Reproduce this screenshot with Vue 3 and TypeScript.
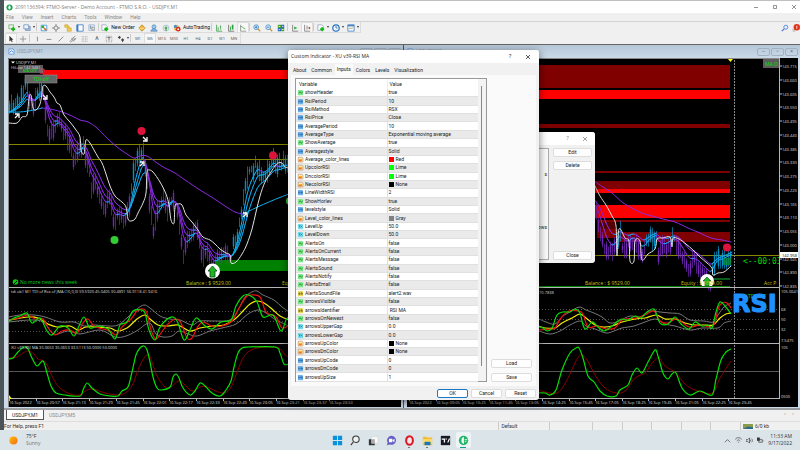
<script setup lang="ts">
type Pt = [number, number]
interface Bar { x: number; high: number; low: number; up: boolean }
interface Seg { d: string; up: boolean }

const menus = ['File', 'View', 'Insert', 'Charts', 'Tools', 'Window', 'Help']

const sheet = '<path d="M1 1h5l2 2v5H1z" fill="#f7f9fc" stroke="#8295ad" stroke-width=".8"/>'
const plus = '<path d="M6.500 4v5M4 6.500h5" stroke="#12b512" stroke-width="2.200"/>'
const icons: Record<string, string> = {
  newChart: '<path d="M1 1h6v5H1z" fill="#e2f1e0" stroke="#5d9b60" stroke-width=".8"/>' + plus,
  profiles: '<path d="M3 3h6v5H3z" fill="#a8c4e4" stroke="#7593ba"/><path d="M1 1h6v5H1z" fill="#eef5fc" stroke="#7593ba"/>',
  market: '<path d="M1.500 1.500h7v7h-7z" fill="#eef7ff" stroke="#3e9ad4"/><path d="M2 2h3v3H2z" fill="#29ad35"/><path d="M5 5l3 3" stroke="#e06c28" stroke-width="2"/>',
  target: '<circle cx="5" cy="5" r="2.500" fill="none" stroke="#777"/><path d="M5 0v3M5 7v3M0 5h3M7 5h3" stroke="#777"/>',
  navigator: '<path d="M1 1h4v3H1zM4 5h5v4H4z" fill="#f8cd55" stroke="#c7a12d" stroke-width=".8"/><circle cx="6" cy="4" r="1.400" fill="#e5bd29"/>',
  terminal: '<path d="M1 1h8v8H1z" fill="#fafdff" stroke="#3a78c4"/><path d="M1 1h2v8H1z" fill="#3a78c4"/>',
  tester: '<path d="M1 1h7v7H1z" fill="#e3edf7" stroke="#8aa5c4" stroke-width=".8"/><path d="M3 2v4M5 3v4" stroke="#6282aa"/><circle cx="6.500" cy="6" r="1.800" fill="#f8e9b4" stroke="#75869b" stroke-width=".8"/>',
  order: sheet + plus,
  editor: '<path d="M1 5l4-4 4 4-4 4z" fill="#f2b53a" stroke="#b37514" stroke-width=".8"/><path d="M2 5l3 1 3-1" stroke="#fff0ad" fill="none"/>',
  user: '<circle cx="5" cy="3.500" r="2.500" fill="#9ac8ef" stroke="#477fba" stroke-width=".8"/><path d="M1 9c1-4 7-4 8 0z" fill="#8ab3da" stroke="#477fba" stroke-width=".8"/>',
  signal: '<circle cx="5" cy="5" r="3.600" fill="none" stroke="#9cbcca"/><circle cx="5" cy="5" r="1.800" fill="#52ae65"/><path d="M5 5v4" stroke="#35a044"/>',
  auto: '<path d="M1 4l4-3 4 3-2 4H2z" fill="#e6b93d"/><circle cx="3" cy="3" r="2" fill="#4390ce"/><circle cx="6.500" cy="6.500" r="3" fill="#d83020"/><path d="M5.500 5.500h2v2h-2z" fill="#fff"/>',
  bars: '<path d="M2 1v8h7M4 4v4M7 2v5M6 3h1" stroke="#3b9a48" fill="none"/>',
  candles: '<path d="M2 1v8h7" stroke="#666" fill="none"/><path d="M4 3h1v5H4zM6 1h2v6H6z" fill="#28a13a"/>',
  line: '<path d="M2 1v8h7" stroke="#888" fill="none"/><path d="M2 3c3 0 3 3 6 3" stroke="#3dab50" fill="none"/>',
  zoomIn: '<circle cx="4" cy="4" r="3" fill="#d5eafa" stroke="#4689c4"/><path d="M4 2.500v3M2.500 4h3" stroke="#2a6eb5"/><path d="M6 6l3 3" stroke="#c59b35" stroke-width="1.600"/>',
  zoomOut: '<circle cx="4" cy="4" r="3" fill="#d5eafa" stroke="#4689c4"/><path d="M2.500 4h3" stroke="#2a6eb5"/><path d="M6 6l3 3" stroke="#c59b35" stroke-width="1.600"/>',
  tile: '<path d="M1 1h4v4H1zM5 5h4v4H5z" fill="#48a333"/><path d="M5 1h4v4H5zM1 5h4v4H1z" fill="#2767bf"/><path d="M2 3h2M6 3h2M2 7h2M6 7h2" stroke="#fff"/>',
  scroll: '<path d="M2 1v8h7" stroke="#777" fill="none"/><path d="M4 3l4 2-4 2z" fill="#31a843"/>',
  shift: '<path d="M2 1v8h7M5 2v5" stroke="#777" fill="none"/><path d="M9 3L6 5l3 2z" fill="#b6563b"/>',
  clock: '<circle cx="5" cy="5" r="4" fill="#eef7ff" stroke="#2873bd" stroke-width="1.500"/><path d="M5 2.500V5h2" stroke="#356792" fill="none"/>',
  template: '<path d="M1 1h8v8H1z" fill="#eef6ff" stroke="#4a86c0"/><path d="M1 2h8" stroke="#4a86c0" stroke-width="2"/><path d="M2 6l2-1 2 1 2-2" stroke="#c59d4e" fill="none"/>',
  cursor: '<path d="M3 1v7l2-1.500 1 2.500 1-.500-1-2.500h2z" fill="#333"/>',
  cross: '<path d="M5 1v8M1 5h8" stroke="#888"/>',
  vline: '<path d="M5.500 2v6" stroke="#777"/>',
  hline: '<path d="M2 5.500h6" stroke="#777"/>',
  trend: '<path d="M2 8l6-6" stroke="#777"/>',
  channel: '<path d="M1 8l7-7M2 9l7-5M3 4l4 4M5 3l3 3" stroke="#666" stroke-width=".8"/>',
  fibo: '<path d="M1 2h8M1 4h8M1 6h8M1 8h8" stroke="#999" stroke-dasharray="1 1"/>',
  label: '<path d="M1.500 1.500h7v7h-7z" fill="none" stroke="#888" stroke-dasharray="1 1"/><path d="M3 3h4M5 3v4" stroke="#555"/>',
  arrows: '<path d="M1 3l2-2 2 2-2 2zM5 6l2-2 2 2-2 3z" fill="#444"/>',
}

interface Tool { icon?: string; text?: string; name: string; drop?: boolean; on?: boolean; sep?: boolean }
const S: Tool = { name: '', sep: true }
const tools: Tool[] = [
  { icon: 'newChart', name: 'New chart', drop: true }, { icon: 'profiles', name: 'Profiles', drop: true }, S,
  { icon: 'market', name: 'Market watch' }, { icon: 'target', name: 'Data window' }, { icon: 'navigator', name: 'Navigator' },
  { icon: 'terminal', name: 'Terminal' }, { icon: 'tester', name: 'Strategy tester' }, S,
  { icon: 'order', name: 'New order', text: 'New Order' }, { icon: 'editor', name: 'Editor' }, { icon: 'user', name: 'Account' },
  { icon: 'signal', name: 'Signals' }, { icon: 'auto', name: 'AutoTrading', text: 'AutoTrading' }, S,
  { icon: 'bars', name: 'Bar chart' }, { icon: 'candles', name: 'Candlesticks' }, { icon: 'line', name: 'Line chart', on: true }, S,
  { icon: 'zoomIn', name: 'Zoom in' }, { icon: 'zoomOut', name: 'Zoom out' }, { icon: 'tile', name: 'Tile windows' }, S,
  { icon: 'scroll', name: 'Auto scroll' }, { icon: 'shift', name: 'Chart shift', on: true }, S,
  { icon: 'order', name: 'Indicators', drop: true }, { icon: 'clock', name: 'Periods', drop: true }, { icon: 'template', name: 'Templates', drop: true },
]
const drawTools: Tool[] = [
  { icon: 'cursor', name: 'Cursor', on: true }, { icon: 'cross', name: 'Crosshair' }, S,
  { icon: 'vline', name: 'Vertical line' }, { icon: 'hline', name: 'Horizontal line' }, { icon: 'trend', name: 'Trendline' },
  { icon: 'channel', name: 'Channel' }, { icon: 'fibo', name: 'Fibonacci' }, { text: 'A', name: 'Text' },
  { icon: 'label', name: 'Text label' }, { icon: 'arrows', name: 'Arrows', drop: true }, S,
]
const frames = ['M1', 'M5', 'M15', 'M30', 'H1', 'H4', 'D1', 'W1', 'MN']

/* curve helpers */
function smooth(p: Pt[]): string {
  let d = `M${p[0][0]} ${p[0][1]}`
  for (let i = 0; i < p.length - 1; i++) {
    const a = p[Math.max(0, i - 1)], b = p[i], c = p[i + 1], e = p[Math.min(p.length - 1, i + 2)]
    d += `C${b[0] + (c[0] - a[0]) / 6} ${b[1] + (c[1] - a[1]) / 6} ${c[0] - (e[0] - b[0]) / 6} ${c[1] - (e[1] - b[1]) / 6} ${c[0]} ${c[1]}`
  }
  return d
}
function at(p: Pt[], x: number): number {
  for (let i = 1; i < p.length; i++) {
    if (x <= p[i][0]) return p[i - 1][1] + (p[i][1] - p[i - 1][1]) * (x - p[i - 1][0]) / (p[i][0] - p[i - 1][0])
  }
  return p[p.length - 1][1]
}
function makeBars(p: Pt[], rising: Pt[]): Bar[] {
  const out: Bar[] = []
  let seed = 11
  const rnd = () => (seed = (seed * 16807) % 2147483647) / 2147483647
  for (let x = p[0][0]; x < p[p.length - 1][0]; x += 2) {
    const y = at(p, x) + (rnd() - 0.5) * 8
    out.push({ x: x + 0.5, high: y - 3 - rnd() * 10, low: y + 3 + rnd() * 9, up: rising.some(r => x >= r[0] && x <= r[1]) })
  }
  return out
}
function average(p: Pt[], k: number): Seg[] {
  const out: Seg[] = []
  let v = p[0][1]
  for (let x = p[0][0]; x < p[p.length - 1][0]; x += 2) {
    const n = v + (at(p, x + 2) - v) * k
    out.push({ d: `M${x} ${v}L${x + 2} ${n}`, up: n < v })
    v = n
  }
  return out
}
const barPath = (b: Bar[], up: boolean) => b.filter(q => q.up === up).map(q => `M${q.x} ${q.high}V${q.low}`).join('')
const bodyPath = (b: Bar[], up: boolean) => b.filter((q, i) => q.up === up && i % 2 === 0).map(q => `M${q.x} ${q.high + 3}V${q.low - 3}`).join('')
const segPath = (s: Seg[], up: boolean) => s.filter(q => q.up === up).map(q => q.d).join('')
const shift = (p: Pt[], dy: number): Pt[] => p.map(([x, y]) => [x, y + dy])

const priceL: Pt[] = [[9, 112], [14, 106], [20, 100], [25, 88], [28, 88], [29, 102], [35, 102], [36, 90], [42, 88], [44, 108], [48, 130], [52, 133], [58, 118], [62, 132], [68, 138], [74, 162], [80, 150], [83, 142], [86, 162], [91, 188], [94, 182], [100, 200], [104, 208], [110, 200], [114, 226], [118, 212], [122, 218], [128, 210], [131, 190], [134, 165], [138, 158], [142, 145], [144, 160], [147, 180], [149, 204], [153, 232], [158, 210], [163, 198], [168, 212], [172, 192], [177, 212], [183, 256], [190, 235], [196, 228], [201, 258], [207, 248], [212, 268], [218, 258], [224, 254], [231, 258], [235, 240], [239, 222], [243, 198], [246, 178], [251, 172], [257, 164], [262, 176], [267, 168], [273, 159], [278, 170], [283, 164], [290, 166]]
const priceR: Pt[] = [[594, 208], [598, 225], [602, 242], [606, 254], [612, 254], [617, 238], [619, 230], [622, 245], [627, 248], [632, 238], [637, 248], [642, 256], [647, 240], [652, 237], [656, 238], [658, 253], [665, 248], [672, 240], [676, 244], [682, 258], [688, 268], [694, 262], [700, 270], [706, 277], [711, 280], [713, 264], [716, 258], [722, 262], [727, 258], [731, 256]]
const barsL = makeBars(priceL, [[9, 28], [36, 42], [130, 146], [233, 290]])
const barsR = makeBars(priceR, [[617, 620], [646, 656], [672, 674], [712, 731]])
const avgL = [average(priceL, 0.36), average(priceL, 0.24), average(priceL, 0.16)]
const avgR = [average(shift(priceR, -4), 0.3), average(shift(priceR, -8), 0.18)]

const slowL: Pt[] = [[42, 108], [50, 109], [62, 112], [72, 116], [80, 120], [88, 122], [97, 128], [107, 138], [117, 147], [127, 154], [134, 158], [140, 156], [147, 156], [157, 163], [165, 168], [175, 173], [185, 180], [200, 190], [213, 198], [225, 206], [235, 212], [243, 214]]
const whiteL: Pt[] = [[9, 123], [17, 123], [22, 117], [27, 115], [29, 98], [31, 95], [33, 108], [36, 110], [40, 104], [42, 93], [43, 86], [46, 86], [50, 92], [54, 97], [57, 103], [60, 105], [64, 115], [70, 122], [76, 130], [80, 137], [81, 150], [84, 154], [86, 140], [90, 143], [94, 150], [98, 157], [102, 163], [106, 174], [110, 186], [115, 196], [122, 202], [126, 207], [128, 219], [131, 221], [135, 219], [138, 213], [143, 203], [146, 193], [147, 172], [149, 170], [153, 172], [160, 182], [166, 194], [169, 205], [171, 220], [174, 223], [175, 206], [178, 204], [182, 205], [186, 215], [192, 222], [198, 230], [203, 237], [210, 240], [215, 244], [220, 249], [226, 253], [230, 255], [231, 263], [236, 262], [242, 254], [247, 244], [252, 229], [256, 212], [260, 196], [265, 182], [271, 172], [275, 166], [278, 163], [282, 163], [285, 167], [289, 168]]
const slowR: Pt[] = [[594, 181], [603, 187], [612, 193], [622, 202], [632, 208], [642, 213], [652, 216], [663, 219], [675, 222], [688, 228], [700, 233], [711, 238], [722, 240], [731, 242]]
const whiteR: Pt[] = [[594, 184], [600, 196], [606, 205], [612, 216], [616, 226], [617, 256], [619, 229], [625, 238], [629, 241], [630, 261], [634, 261], [635, 241], [640, 241], [642, 260], [648, 254], [655, 249], [657, 239], [663, 238], [670, 237], [672, 247], [673, 238], [679, 239], [686, 244], [693, 250], [700, 257], [707, 263], [712, 268], [713, 275], [718, 273], [724, 272], [731, 266]]

const tdiL = {
  top: [[9, 317], [20, 315], [34, 315], [45, 317], [60, 322], [74, 322], [84, 326], [95, 325], [108, 326], [118, 325], [128, 317], [137, 309], [144, 305], [150, 308], [160, 316], [170, 319], [180, 320], [192, 325], [200, 321], [215, 321], [230, 320], [238, 310], [245, 297], [252, 292], [257, 291], [263, 295], [274, 300], [282, 307], [289, 312]] as Pt[],
  mid: [[9, 320], [28, 317], [38, 318], [48, 324], [57, 327], [70, 326], [78, 330], [86, 327], [98, 327], [110, 328], [117, 331], [127, 328], [137, 319], [145, 315], [150, 319], [158, 325], [168, 326], [178, 325], [190, 331], [200, 328], [212, 326], [224, 325], [235, 319], [243, 311], [250, 304], [257, 301], [264, 303], [272, 309], [280, 316], [289, 320]] as Pt[],
  low: [[9, 322], [30, 320], [43, 322], [54, 334], [68, 331], [80, 334], [100, 330], [115, 337], [126, 336], [138, 330], [146, 324], [151, 324], [156, 334], [163, 337], [172, 336], [179, 331], [188, 334], [197, 336], [210, 331], [222, 328], [236, 324], [248, 314], [258, 310], [266, 313], [276, 320], [289, 326]] as Pt[],
  red: [[9, 320], [19, 318], [28, 315], [35, 319], [43, 319], [49, 329], [55, 335], [62, 331], [70, 330], [77, 333], [83, 323], [88, 319], [94, 326], [103, 329], [110, 331], [116, 335], [122, 327], [131, 319], [137, 311], [143, 309], [147, 313], [151, 330], [156, 339], [161, 333], [168, 324], [176, 319], [181, 323], [187, 338], [192, 338], [197, 328], [203, 322], [212, 326], [222, 326], [232, 321], [239, 308], [246, 297], [251, 295], [260, 297], [266, 312], [276, 317], [282, 328], [289, 325]] as Pt[],
  green: [[9, 321], [14, 318], [20, 316], [27, 313], [32, 323], [40, 318], [47, 331], [52, 335], [60, 326], [68, 328], [74, 336], [79, 326], [84, 317], [90, 328], [98, 326], [108, 329], [115, 339], [120, 325], [127, 322], [133, 311], [141, 310], [145, 313], [149, 330], [155, 340], [159, 329], [165, 321], [173, 317], [178, 323], [184, 340], [190, 330], [196, 318], [204, 325], [212, 329], [221, 322], [231, 320], [236, 306], [243, 296], [249, 295], [257, 302], [263, 317], [273, 315], [281, 331], [286, 320], [289, 317]] as Pt[],
}
const tdiR = {
  top: [[539, 319], [546, 322], [555, 324], [563, 316], [570, 312], [579, 307], [586, 310], [594, 313], [602, 317], [610, 323], [619, 321], [630, 316], [640, 317], [650, 311], [660, 312], [670, 313], [680, 314], [690, 320], [704, 321], [713, 322], [718, 315], [724, 307], [731, 303]] as Pt[],
  mid: [[539, 326], [545, 328], [555, 328], [562, 323], [572, 318], [580, 314], [586, 318], [595, 325], [603, 327], [612, 326], [622, 322], [635, 319], [645, 318], [656, 315], [665, 319], [675, 319], [685, 323], [695, 325], [705, 325], [713, 325], [720, 318], [726, 314], [731, 313]] as Pt[],
  low: [[539, 331], [550, 334], [560, 331], [570, 325], [580, 321], [586, 326], [595, 329], [606, 333], [614, 331], [622, 328], [634, 326], [645, 322], [656, 319], [665, 324], [675, 326], [690, 330], [702, 328], [718, 328], [724, 323], [731, 321]] as Pt[],
  red: [[539, 330], [550, 329], [555, 328], [561, 318], [569, 311], [578, 311], [583, 314], [588, 327], [597, 326], [606, 329], [615, 328], [622, 320], [636, 318], [645, 315], [654, 311], [660, 321], [668, 323], [677, 319], [689, 327], [700, 325], [713, 326], [718, 309], [722, 303], [727, 303], [731, 308]] as Pt[],
  green: [[539, 327], [543, 328], [547, 331], [552, 328], [557, 315], [563, 312], [570, 312], [575, 309], [580, 313], [583, 325], [586, 329], [592, 322], [597, 326], [604, 331], [612, 326], [618, 321], [622, 319], [628, 320], [635, 316], [641, 318], [647, 312], [654, 309], [658, 319], [661, 324], [668, 324], [675, 317], [681, 324], [689, 329], [695, 322], [702, 326], [708, 325], [712, 328], [716, 312], [720, 302], [725, 306], [731, 314]] as Pt[],
}
const rsiL: Pt[] = [[9, 359], [13, 358], [18, 352], [24, 347], [28, 349], [32, 358], [37, 366], [43, 361], [47, 373], [51, 386], [56, 393], [65, 395], [80, 396], [83, 390], [87, 383], [92, 388], [100, 394], [110, 396], [118, 396], [122, 391], [128, 387], [132, 372], [136, 355], [140, 348], [144, 346], [147, 350], [150, 362], [153, 377], [157, 388], [161, 390], [170, 387], [173, 377], [176, 374], [179, 378], [183, 388], [190, 395], [195, 391], [200, 383], [205, 386], [212, 393], [220, 396], [226, 390], [231, 381], [234, 367], [238, 353], [242, 348], [248, 347], [275, 347], [280, 353], [284, 364], [289, 364]]
const rsiSlowL: Pt[] = [[9, 358], [17, 357], [23, 353], [28, 351], [34, 354], [38, 359], [44, 361], [48, 367], [54, 380], [60, 388], [70, 394], [80, 395], [85, 391], [93, 389], [105, 393], [118, 395], [125, 393], [132, 386], [138, 370], [144, 358], [148, 355], [151, 359], [157, 376], [165, 387], [171, 387], [178, 381], [184, 384], [192, 391], [200, 387], [207, 387], [216, 391], [223, 393], [230, 389], [236, 375], [242, 360], [248, 352], [257, 348], [270, 347], [279, 348], [285, 355], [289, 358]]
const rsiR: Pt[] = [[539, 393], [545, 393], [550, 395], [556, 390], [562, 370], [570, 353], [576, 348], [579, 348], [583, 358], [588, 376], [594, 382], [600, 391], [607, 396], [616, 396], [620, 390], [628, 385], [632, 375], [637, 368], [642, 373], [648, 362], [655, 350], [658, 356], [663, 373], [668, 379], [672, 374], [676, 373], [682, 388], [690, 395], [700, 391], [712, 395], [716, 379], [721, 360], [726, 352], [731, 349]]
const rsiSlowR: Pt[] = [[539, 390], [545, 392], [557, 393], [566, 382], [576, 361], [581, 355], [587, 360], [595, 375], [605, 388], [616, 393], [625, 391], [635, 378], [645, 373], [652, 363], [659, 358], [665, 366], [676, 373], [685, 384], [695, 390], [712, 393], [720, 378], [731, 361]]

const timesL = ['2022', '20:57', '21:13', '21:29', '21:45', '22:01', '22:17', '22:33', '22:49', '23:05', '23:21', '23:37', '23:53']
const timesR = ['2022', '09:05', '10:25', '11:45', '13:05', '14:25', '15:45', '17:05', '18:25', '19:45', '21:05', '22:25', '23:45']
const prices = Array.from({ length: 17 }, (_, i) => (143.715 - i * 0.055).toFixed(3))
const zones = [
  { x: 530, y: 65, w: 200, h: 23, c: '#800000' }, { x: 530, y: 90, w: 200, h: 9, c: '#ff0000' },
  { x: 530, y: 124, w: 200, h: 4, c: '#800000' }, { x: 590, y: 171, w: 140, h: 2, c: '#800000' },
  { x: 590, y: 181, w: 140, h: 8, c: '#800000' }, { x: 590, y: 189, w: 140, h: 4, c: '#ff0000' },
  { x: 590, y: 205, w: 140, h: 13, c: '#ff0000' }, { x: 597, y: 220, w: 133, h: 2, c: '#800000' },
  { x: 597, y: 222, w: 18, h: 7, c: '#500000' },
  { x: 597, y: 229, w: 21, h: 9, c: '#800000' }, { x: 618, y: 232, w: 112, h: 10, c: '#800000' },
]
const pointers = [{ x: 17, y: 116, r: 0 }, { x: 45, y: 97, r: 90 }, { x: 145, y: 139, r: 90 }, { x: 142, y: 164, r: 0 }, { x: 245, y: 215, r: 0 }]

/* dialog data */
const tabs = ['About', 'Common', 'Inputs', 'Colors', 'Levels', 'Visualization']
interface Row { k: 'bool' | 'int' | 'dbl' | 'str' | 'col'; n: string; v: string; c?: string }
const rows: Row[] = [
  { k: 'bool', n: 'showHeader', v: 'true' }, { k: 'int', n: 'RsiPeriod', v: '10' }, { k: 'int', n: 'RsiMethod', v: 'RSX' },
  { k: 'int', n: 'RsiPrice', v: 'Close' }, { k: 'int', n: 'AveragePeriod', v: '10' },
  { k: 'int', n: 'AverageType', v: 'Exponential moving average' }, { k: 'bool', n: 'ShowAverage', v: 'true' },
  { k: 'int', n: 'Averagestyle', v: 'Solid' }, { k: 'col', n: 'Average_color_lines', v: 'Red', c: 'red' },
  { k: 'col', n: 'UpcolorRSI', v: 'Lime', c: 'lime' }, { k: 'col', n: 'DncolorRSI', v: 'Lime', c: 'lime' },
  { k: 'col', n: 'NecolorRSI', v: 'None', c: 'none' }, { k: 'int', n: 'LineWidthRSI', v: '2' },
  { k: 'bool', n: 'ShowHorlev', v: 'true' }, { k: 'int', n: 'levelstyle', v: 'Solid' },
  { k: 'col', n: 'Level_color_lines', v: 'Gray', c: 'gray' }, { k: 'dbl', n: 'LevelUp', v: '50.0' },
  { k: 'dbl', n: 'LevelDown', v: '50.0' }, { k: 'bool', n: 'AlertsOn', v: 'false' }, { k: 'bool', n: 'AlertsOnCurrent', v: 'false' },
  { k: 'bool', n: 'AlertsMessage', v: 'false' }, { k: 'bool', n: 'AlertsSound', v: 'false' }, { k: 'bool', n: 'AlertsNotify', v: 'false' },
  { k: 'bool', n: 'AlertsEmail', v: 'false' }, { k: 'str', n: 'AlertsSoundFile', v: 'alert2.wav' },
  { k: 'bool', n: 'arrowsVisible', v: 'false' }, { k: 'str', n: 'arrowsIdentifier', v: '\u00a0RSI MA' },
  { k: 'bool', n: 'arrowsOnNewest', v: 'false' }, { k: 'dbl', n: 'arrowsUpperGap', v: '0.0' }, { k: 'dbl', n: 'arrowsLowerGap', v: '0.0' },
  { k: 'col', n: 'arrowsUpColor', v: 'None', c: 'none' }, { k: 'col', n: 'arrowsDnColor', v: 'None', c: 'none' },
  { k: 'int', n: 'arrowsUpCode', v: '0' }, { k: 'int', n: 'arrowsDnCode', v: '0' }, { k: 'int', n: 'arrowsUpSize', v: '1' },
]
const kinds: Record<Row['k'], string> = {
  bool: '<path d="M0 1h5l1 1v5H0z" fill="#7ee68b"/><path d="M1 5l1.500-2 1.500 2 1.500-2" stroke="#117a2a" stroke-width=".8" fill="none"/>',
  int: '<path d="M0 1h5l1 1v5H0z" fill="#6fb2ea"/><path d="M1 3v2M2.500 3v2M4 3v2M5 3v2" stroke="#164f91" stroke-width=".8"/>',
  dbl: '<path d="M0 1h5l1 1v5H0z" fill="#74dcec"/><path d="M1 3h1v2M3 3l2 2M5 3L3 5" stroke="#17788c" stroke-width=".8" fill="none"/>',
  str: '<path d="M0 1h5l1 1v5H0z" fill="#ead95e"/><path d="M1 3.500h1.500V5H1zM4 2.500V5h1.200V3.800H4" stroke="#736010" stroke-width=".8" fill="none"/>',
  col: '<path d="M.4 1.400h4.600l.8.800v4.600H.4z" fill="#fff" stroke="#b78a58" stroke-width=".8"/><path d="M1 3h4v3H1z" fill="#ffb516"/><path d="M1 5h2l1-1v2H1z" fill="#e84a20"/>',
}

const taskIcons = [
  { name: 'Start', art: '<path d="M1 1h5v5H1zM7 1h5v5H7zM1 7h5v5H1zM7 7h5v5H7z" fill="#0a91dc"/>' },
  { name: 'Search', art: '<circle cx="7" cy="5" r="3.800" fill="#edf3f5" stroke="#333" stroke-width="1.200"/><path d="M4 8l-3 4" stroke="#333" stroke-width="1.300"/>' },
  { name: 'Task view', art: '<path d="M4 2h8v8H4z" fill="#f8f8f8" stroke="#c6c9cb" stroke-width=".5"/><path d="M1 5h3v5h4v2H1z" fill="#333"/><path d="M4 5h4v5H4z" fill="#aaa"/>' },
  { name: 'Chat', art: '<path d="M6.500 1a5.300 5.300 0 1 1-2 10.200L1 12l1-3A5.300 5.300 0 0 1 6.500 1z" fill="#655fc5"/><path d="M3.500 4.500h4v4h-4zM8 5.800L10 4.500v4L8 7.200z" fill="#fff"/>' },
  { name: 'Opera', dot: true, art: '<ellipse cx="6.500" cy="6.500" rx="4" ry="5" fill="#f5e7e9" stroke="#dc1826" stroke-width="2.400"/>' },
  { name: 'Explorer', dot: true, art: '<path d="M1 2h4l1 1h6v9H1z" fill="#f5bd36"/><path d="M1 5h11v5H1z" fill="#ffdb68"/><path d="M3 8h7v4H3z" fill="#1678be"/>' },
  { name: 'TradingView', art: '<path d="M1 1h11v11H1z" fill="#151924"/><path d="M2 4h4v5H4.500V5.500H2zM8.500 9l2-5H12l-2 5z" fill="#fff"/><circle cx="7.300" cy="4.700" r=".8" fill="#fff"/>' },
  { name: 'FTMO', active: true, art: '<circle cx="6.500" cy="6.500" r="5.500" fill="#22b568"/><path d="M7 2.500c-4 0-4 8 0 8V2.500z" fill="#e9fff3"/><path d="M8 5.500h3M8 7.500h2" stroke="#e9fff3"/>' },
]
</script>

<template>
  <div class="desktop">
    <div class="app">
      <header class="titlebar">
        <svg class="logo" viewBox="0 0 8 8"><circle cx="4" cy="4" r="3.500" fill="#16a34d" /><ellipse cx="4" cy="4" rx="1.300" ry="2.400" fill="#fff" /></svg>
        <span class="grow">2091136394: FTMO-Server - Demo Account - FTMO S.R.O. - USDJPY,M1</span>
        <div class="caps">
          <button aria-label="Minimize"><svg viewBox="0 0 6 6"><path d="M1 3.500h4" /></svg></button>
          <button aria-label="Restore"><svg viewBox="0 0 6 6"><path d="M1.500 1.500h3v3h-3z" /></svg></button>
          <button aria-label="Close"><svg viewBox="0 0 6 6"><path d="M1 1l4 4M5 1L1 5" /></svg></button>
        </div>
      </header>
      <nav class="menu"><a v-for="m in menus" :key="m" href="#">{{ m }}</a></nav>

      <div class="tools">
        <div class="bar">
          <template v-for="(t, i) in tools" :key="i">
            <i v-if="t.sep" class="sep"></i>
            <button v-else class="tool" :class="{ drop: t.drop, on: t.on, wide: t.text }" :aria-label="t.name">
              <svg viewBox="0 0 10 10" v-html="icons[t.icon!]"></svg><span v-if="t.text">{{ t.text }}</span><b v-if="t.drop"></b>
            </button>
          </template>
        </div>
        <span class="grow"></span>
        <button class="tool" aria-label="Search"><svg viewBox="0 0 10 10"><circle cx="6" cy="4" r="2.500" fill="#e6f0ff" stroke="#4575ce" /><path d="M4 6L1 9" stroke="#4575ce" stroke-width="1.500" /></svg></button>
        <button class="tool note" aria-label="Notifications"><svg viewBox="0 0 10 10"><path d="M0 6h4v4H1z" fill="#ccc" /><circle cx="6" cy="4" r="4" fill="#df321b" /><path d="M6 2v4" stroke="#fff" /></svg></button>
      </div>
      <div class="tools second">
        <div class="bar">
          <template v-for="(t, i) in drawTools" :key="i">
            <i v-if="t.sep" class="sep"></i>
            <button v-else class="tool" :class="{ drop: t.drop, on: t.on }" :aria-label="t.name">
              <svg v-if="t.icon" viewBox="0 0 10 10" v-html="icons[t.icon]"></svg><span v-else class="letter">{{ t.text }}</span><b v-if="t.drop"></b>
            </button>
          </template>
          <button v-for="f in frames" :key="f" class="tool frame" :class="{ on: f === 'M5' }">{{ f }}</button>
        </div>
      </div>

      <main class="mdi">
        <section class="win left">
          <div class="wintitle">
            <svg class="winicon" viewBox="0 0 8 8"><path d="M1 1h5l1 2v4H1z" fill="#e9f2ff" stroke="#6799d8" /><path d="M2 5l2-2 2 2" stroke="#377bd0" fill="none" /></svg>
            <span class="grow">USDJPY,M1</span>
            <span class="winbtns"><button aria-label="Minimize">–</button><button aria-label="Maximize">▫</button><button aria-label="Close">×</button></span>
          </div>
          <svg class="chart" viewBox="8 58 393 349" preserveAspectRatio="xMinYMin slice">
            <rect x="8" y="58" width="393" height="349" fill="#000" />
            <path d="M8.500 407V58.500H401" class="edge" />
            <rect x="43" y="70" width="350" height="9" fill="#f00" />
            <circle cx="42" cy="71" r="3" fill="#dc143c" />
            <rect x="215" y="260" width="180" height="11" fill="#008000" />
            <path d="M9 144.500H400M9 159.500H400" class="level" />
            <path :d="barPath(barsL, false)" class="wick down" /><path :d="bodyPath(barsL, false)" class="body down" />
            <path :d="barPath(barsL, true)" class="wick up" /><path :d="bodyPath(barsL, true)" class="body up" />
            <g v-for="(a, i) in avgL" :key="i"><path :d="segPath(a, false)" class="ma falling" /><path :d="segPath(a, true)" class="ma rising" /></g>
            <path :d="smooth(slowL)" class="ma falling" />
            <path d="M9 112C22 113 35 110 42 108M243 214C255 208 270 201 289 194" class="ma rising" />
            <path :d="smooth(whiteL)" class="ma white" />
            <circle cx="141.500" cy="131" r="4" fill="#dc143c" /><circle cx="273" cy="155.500" r="4" fill="#dc143c" />
            <circle cx="114.500" cy="240" r="4" fill="#32cd32" /><circle cx="290" cy="201" r="4" fill="#32cd32" />
            <path v-for="(p, i) in pointers" :key="i" d="M-2 2L1-1M-2-2H2V2" class="pointer" :transform="`translate(${p.x} ${p.y}) rotate(${p.r})`" />
            <circle cx="212.500" cy="271" r="7.500" fill="#fff" /><path d="M208 271l4.500-5 4.500 5h-2v6h-5v-6z" fill="#22b322" stroke="#064c10" stroke-width=".8" />
            <path d="M11 61.500h4l-2 2z" fill="#fff" />
            <rect x="18" y="65" width="25" height="8" fill="#707070" opacity=".8" /><text x="23" y="72" class="tiny lime">MA OFF</text>
            <text x="16" y="64" class="tiny">USDJPY,M1</text>
            <text x="11" y="69" class="tiny">HiLow 142.9481</text>
            <rect x="25" y="75" width="32" height="8" fill="#666" stroke="#999" stroke-width=".5" /><text x="33" y="81" class="mid lime">TDI-off</text>
            <circle cx="15.500" cy="282" r="2.800" fill="#0bc50b" /><path d="M14 284l3-3" stroke="#000" />
            <text x="20" y="284" class="mid news">No more news this week</text>
            <text x="186" y="285" class="mid gold">Balance : $ 9529.00</text><text x="282" y="285" class="mid gold">Equity</text>
            <path d="M9 287.500H401M9 343.500H401M9 398.500H401" class="split" />
            <path d="M9 311.500H401M9 321.500H401M9 331.500H401" class="dots" />
            <path :d="smooth(tdiL.top)" class="ind gray" /><path :d="smooth(tdiL.low)" class="ind gray" /><path :d="smooth(tdiL.mid)" class="ind yellow" />
            <path :d="smooth(tdiL.red)" class="ind red" /><path :d="smooth(tdiL.green)" class="ind green" />
            <text x="11" y="293" class="tiny">tdi ob1 M1 TDI of Rsx of JMA (10,0,0) 59.5920 45.0405 30.4891 56.9118 41.9416</text>
            <path d="M9 371.500H401" class="dim" />
            <path :d="smooth(rsiSlowL)" class="ind slow" /><path :d="smooth(rsiL)" class="ind green" />
            <text x="11" y="349" class="tiny">XU v39-RSI MA 35.0653 35.0653 33.5113 50.0000 50.0000</text>
            <path d="M9 395l3 4H9z" fill="#ff0" />
            <g v-for="(t, i) in timesL" :key="t"><path :d="`M${9.5 + Math.round(i * 26.7)} 398v3`" class="split" /><text :x="9 + Math.round(i * 26.7)" y="404" class="tiny">16 Sep {{ t }}</text></g>
          </svg>
        </section>

        <section class="win right">
          <div class="wintitle">
            <svg class="winicon" viewBox="0 0 8 8"><path d="M1 1h5l1 2v4H1z" fill="#e9f2ff" stroke="#6799d8" /></svg>
            <span class="grow">USDJPY,M5</span>
            <span class="winbtns"><button aria-label="Minimize">–</button><button aria-label="Maximize">▫</button><button aria-label="Close">×</button></span>
          </div>
          <svg class="chart" viewBox="407 58 391 349" preserveAspectRatio="xMinYMin slice">
            <rect x="407" y="58" width="391" height="349" fill="#000" />
            <path d="M407 58.500H780" class="edge" />
            <rect v-for="(z, i) in zones" :key="i" :x="z.x" :y="z.y" :width="z.w" :height="z.h" :fill="z.c" />
            <path d="M407 255.500H780" class="level" />
            <path d="M734.500 60V398" class="vdots" />
            <path :d="barPath(barsR, false)" class="wick down" /><path :d="bodyPath(barsR, false)" class="body down" />
            <path :d="barPath(barsR, true)" class="wick up" /><path :d="bodyPath(barsR, true)" class="body up" />
            <g v-for="(a, i) in avgR" :key="i"><path :d="segPath(a, false)" class="ma falling" /><path :d="segPath(a, true)" class="ma rising" /></g>
            <path :d="smooth(slowR)" class="ma falling" /><path :d="smooth(whiteR)" class="ma white" />
            <rect x="712" y="278" width="18" height="2" fill="#075c19" /><rect x="723" y="258" width="8" height="7" fill="#0a8a35" opacity=".8" />
            <circle cx="727" cy="247.500" r="4" fill="#dc143c" />
            <circle cx="707" cy="281" r="7" fill="#fff" /><path d="M703 281l4-4 4 4h-2v5h-4v-5z" fill="#22b322" stroke="#064c10" stroke-width=".6" />
            <text x="585" y="285" class="mid gold">Balance : $ 9529.00</text><text x="681" y="285" class="mid gold">Equity : $ 9529.00</text><text x="764" y="285" class="mid gold">Acc P</text>
            <path d="M728 59h5l-2.500 3z" fill="#ff0" />
            <rect x="763" y="59" width="16" height="9" fill="#5c5c5c" /><text x="765" y="66" class="mid lime">MA O</text>
            <text x="743" y="264" class="timer">&lt;--00:03</text>
            <path d="M530 286.500H730" stroke="#008000" /><path d="M407 287.500H780M407 343.500H780M407 398.500H780" class="split" />
            <path d="M407 309.500H780M407 319.500H780M407 329.500H780" class="dots" />
            <path :d="smooth(tdiR.top)" class="ind gray" /><path :d="smooth(tdiR.low)" class="ind gray" /><path :d="smooth(tdiR.mid)" class="ind yellow" />
            <path :d="smooth(tdiR.red)" class="ind red" /><path :d="smooth(tdiR.green)" class="ind green" />
            <text x="539" y="294" class="tiny">70.7838</text>
            <path d="M407 371.500H780" class="dim" />
            <path :d="smooth(rsiSlowR)" class="ind slow" /><path :d="smooth(rsiR)" class="ind green" />
            <text x="748" y="298" class="mid lime">TDI OFF</text>
            <text x="732" y="312" class="big">RSI</text>
            <rect x="780" y="58" width="18" height="341" fill="#000" />
            <path d="M779.500 58V398" class="split" />
            <g v-for="(p, i) in prices" :key="p"><path :d="`M780 ${Math.round(i * 13.75) + 66}h2`" class="split" /><text x="782" :y="Math.round(i * 13.75) + 68" class="tiny">{{ p }}</text></g>
            <rect x="780" y="252" width="18" height="6" fill="#fff" /><text x="782" y="257" class="tiny ink">142.958</text>
            <text x="781" y="293" class="tiny">105.0641</text><text x="781" y="311" class="tiny">68</text><text x="781" y="321" class="tiny">50</text><text x="781" y="331" class="tiny">32</text>
            <text x="781" y="342" class="tiny">7.5475</text><text x="781" y="349" class="tiny">105</text><text x="781" y="398" class="tiny">0500</text>
            <g v-for="(t, i) in timesR" :key="t"><path :d="`M${409.5 + Math.round(i * 26.6)} 398v3`" class="split" /><text :x="409 + Math.round(i * 26.6)" y="404" class="tiny">16 Sep {{ t }}</text></g>
          </svg>
        </section>

        <section class="dialog list" role="dialog" aria-label="Indicators">
          <div class="dtitle"><span class="grow"></span><button aria-label="Help">?</button><button aria-label="Close"><svg viewBox="0 0 6 6"><path d="M1 1l4 4M5 1L1 5" /></svg></button></div>
          <div class="listbody">
            <div class="tree"><span>s</span><span>rows</span></div>
            <div class="side"><button class="push">Edit</button><button class="push">Delete</button><span class="grow"></span><button class="push">Close</button></div>
          </div>
        </section>

        <section class="dialog inputs" role="dialog" aria-label="Custom Indicator">
          <div class="dtitle"><span class="grow">Custom Indicator - XU v39-RSI MA</span><button aria-label="Help">?</button><button aria-label="Close"><svg viewBox="0 0 6 6"><path d="M1 1l4 4M5 1L1 5" /></svg></button></div>
          <div class="tabs"><button v-for="t in tabs" :key="t" :class="{ on: t === 'Inputs' }">{{ t }}</button></div>
          <div class="panel">
            <div class="gridbox">
              <table>
                <thead><tr><th>Variable</th><th>Value</th></tr></thead>
                <tbody>
                  <tr v-for="r in rows" :key="r.n">
                    <td><svg viewBox="0 0 6 8" v-html="kinds[r.k]"></svg>{{ r.n }}</td>
                    <td><i v-if="r.c" class="swatch" :class="r.c"></i>{{ r.v }}</td>
                  </tr>
                </tbody>
              </table>
              <div class="scroll"><i></i></div>
            </div>
            <div class="side"><span class="grow"></span><button class="push">Load</button><button class="push">Save</button></div>
          </div>
          <div class="foot"><button class="push main">OK</button><button class="push">Cancel</button><button class="push">Reset</button></div>
        </section>
      </main>

      <nav class="doctabs"><button class="on">USDJPY,M1</button><button>USDJPY,M5</button><span class="grow"></span><span class="nudge">‹</span><span class="nudge">›</span></nav>
      <footer class="status">
        <span class="help">For Help, press F1</span><span class="cell profile">Default</span>
        <span class="cell"></span><span class="cell"></span><span class="cell"></span><span class="cell"></span><span class="cell"></span>
        <span class="cell"></span>
        <span class="cell net"><svg viewBox="0 0 12 6"><path d="M0 0h12v6H0z" fill="#8a9b4a" /><path d="M0 6l6-3 6 1v2z" fill="#2a6a8c" /></svg>6/0 kb</span>
      </footer>
    </div>

    <footer class="taskbar">
      <div class="weather">
        <svg viewBox="0 0 10 10"><defs><linearGradient id="sun" x2="1" y2="1"><stop stop-color="#ffb900" /><stop offset="1" stop-color="#f26f1c" /></linearGradient></defs><circle cx="5" cy="5" r="4.500" fill="url(#sun)" /></svg>
        <div><span>75°F</span><span class="soft">Sunny</span></div>
      </div>
      <div class="pinned"><button v-for="t in taskIcons" :key="t.name" :aria-label="t.name" :class="{ active: t.active, dot: t.dot }"><svg viewBox="0 0 13 13" v-html="t.art"></svg></button></div>
      <div class="tray">
        <svg viewBox="0 0 8 8"><path d="M1 6l3-3 3 3" /></svg>
        <svg viewBox="0 0 8 8"><path d="M0 3c2-3 6-3 8 0M2 4.500c1-1.500 3-1.500 4 0M3.500 6h1" /></svg>
        <svg viewBox="0 0 8 8"><path d="M0 3h2l2-2v6L2 5H0zM5 3v2M6.500 2c1 1 1 3 0 4" /></svg>
        <svg viewBox="0 0 8 8"><path d="M2 3h4v3H2zM7 4v1" /><path d="M0 1h3v3H0z" fill="#333" /></svg>
        <div class="time"><span>11:33 AM</span><span>9/17/2022</span></div>
      </div>
    </footer>
  </div>
</template>

<style>
body { margin: 0; }
</style>

<style scoped>
* { box-sizing: border-box; }
.desktop { display: flex; flex-direction: column; min-height: 100vh; background: #4b5459; font: 5px/7px Roboto, "Noto Sans", sans-serif; color: #333; overflow: hidden; }
button { font: inherit; color: inherit; border: 0; padding: 0; margin: 0; background: none; display: flex; align-items: center; justify-content: center; }
a { color: inherit; text-decoration: none; }
svg { display: block; fill: none; }
.grow { flex: 1; }
.app { flex: 1; display: flex; flex-direction: column; margin-left: 4px; background: #f0f0f0; border-top: 1px solid #bfbfbf; }
.titlebar { display: flex; align-items: center; height: 12px; background: #fff; padding: 0 3px 0 2px; gap: 2px; color: #808080; font-family: "Open Sans", sans-serif; }
.logo { width: 7px; height: 7px; }
.caps { display: flex; gap: 13px; }
.caps svg, .dtitle svg { width: 6px; height: 6px; stroke: #777; stroke-width: .8px; }
.menu { display: flex; align-items: center; gap: 8px; height: 9px; padding: 0 2px; color: #888; border-bottom: 1px solid #d2d2d2; }
.tools { display: flex; height: 11px; padding-left: 2px; }
.second { padding-left: 1px; }
.bar { display: flex; border: solid #dcdcdc; border-width: 0 1px 1px 0; }
.sep { width: 2px; margin: 1px 0; border-left: 1px solid #ccc; }
.tool { width: 12px; height: 11px; }
.tool svg { width: 8px; height: 8px; }
.tool.note { width: 9px; }
.tool.drop { width: 15px; gap: 2px; }
.tool.drop b { border: 1px solid transparent; border-top: 2px solid #333; }
.tool.on { background: #f8f8f8; outline: 1px solid #ddd; outline-offset: -1px; }
.tool.wide { width: auto; min-width: 36px; gap: 2px; padding: 0 1px; color: #111; }
.frame { font-size: 4px; color: #666; }
.letter { font-weight: 700; color: #777; }

.mdi { position: relative; flex: 1; display: grid; grid-template-columns: 399fr 396fr; gap: 1px; min-height: 366px; background: #50565c; border-top: 1px solid #666; border-bottom: 2px solid #9a9da0; }
.win { display: flex; flex-direction: column; min-width: 0; background: linear-gradient(#b5c6d7, #cddbe9 14px, #cddbe9); }
.left { padding: 0 2px 1px 4px; }
.right { padding: 0 2px 1px 3px; }
.wintitle { display: flex; align-items: center; height: 13px; gap: 2px; color: #8b96a3; }
.winicon { width: 7px; height: 7px; }
.winbtns { display: flex; gap: 1px; }
.winbtns button { width: 13px; height: 8px; border: 1px solid #a2b1c1; border-radius: 2px; color: #667; line-height: 5px; }
.chart { flex: 1; width: 100%; min-height: 0; height: 348px; font-family: "Open Sans", sans-serif; }

.edge { stroke: #888; }
.level { stroke: #858500; }
.wick { stroke-width: 1px; opacity: .65; }
.body { stroke-width: 1.500px; opacity: .8; }
.down { stroke: #7a2bc4; }
.up { stroke: #069bd3; }
.ma { stroke-width: 1px; stroke-linecap: round; stroke-linejoin: round; }
.falling { stroke: #8a2be2; }
.rising { stroke: #10aef0; }
.white { stroke: #e0e0e0; }
.pointer { stroke: #fff; stroke-width: 1.300px; }
.split { stroke: #b5b5b5; }
.dots { stroke: #555; stroke-dasharray: 1 2; }
.vdots { stroke: #888; stroke-dasharray: 2 1; }
.dim { stroke: #555; }
.ind { stroke-width: 1.200px; stroke-linejoin: round; }
.gray { stroke: #777; stroke-width: 1px; }
.yellow { stroke: #f5ef00; }
.red { stroke: #f01010; }
.green { stroke: #05df05; }
.slow { stroke: #8a0000; stroke-width: 1px; }
.tiny { font-size: 4px; fill: #ddd; }
.mid { font-size: 5px; fill: #ddd; }
.gold { fill: #c8c010; }
.lime { fill: #00e000; }
.news { fill: #00cf20; }
.ink { fill: #000; }
.timer { font: 8px "DejaVu Sans Mono", monospace; fill: #00d800; }
.big { font: 700 24px "DejaVu Sans", sans-serif; fill: #1e90ff; stroke: #1e90ff; stroke-width: 1px; }

.dialog { position: absolute; display: flex; flex-direction: column; background: #f1f1f1; border-radius: 3px; overflow: hidden; color: #222; box-shadow: 0 2px 8px #0008; }
.inputs { left: 284px; top: 5px; width: 251px; height: 350px; }
.list { left: 420px; top: 87px; width: 171px; height: 131px; }
.dtitle { display: flex; align-items: center; height: 13px; flex: none; padding: 0 2px 0 3px; background: #fff; font-family: "Open Sans", sans-serif; }
.dtitle button { width: 18px; height: 11px; font-size: 6px; }
.dtitle svg { stroke: #333; }
.list .dtitle { color: #888; }
.list .dtitle button { width: 17px; }
.list .dtitle svg { stroke: #888; }
.tabs { display: flex; align-items: flex-end; gap: 1px; height: 12px; padding: 0 3px; }
.tabs button { height: 10px; padding: 0 2px; }
.tabs .on { background: #fafafa; height: 11px; }
.panel { flex: 1; display: flex; gap: 4px; margin: 0 3px; padding: 3px 4px 4px; background: #fafafa; min-height: 0; }
.gridbox { display: flex; width: 192px; border: 1px solid #999; background: #fff; }
table { flex: 1; height: 303px; border-collapse: collapse; table-layout: fixed; }
th, td { padding: 0; line-height: 8px; text-align: left; font-weight: 400; white-space: nowrap; }
th { height: 10px; padding-left: 3px; }
th:first-child { width: 91px; }
th + th { border-left: 1px solid #eee; padding-left: 2px; }
td { border-bottom: 1px solid #e0e0e0; line-height: 7px; }
td + td { border-left: 1px solid #e0e0e0; padding-left: 1px; }
td svg { float: left; width: 7px; height: 7px; margin: 0 1px; }
tbody tr:nth-child(even) { background: #eaeaea; }
.swatch { float: left; width: 5px; height: 5px; margin: 1px 2px 0 0; }
.swatch.red { background: #f00; }
.swatch.lime { background: #0f0; }
.swatch.none { background: #000; }
.swatch.gray { background: #808080; }
.scroll { width: 8px; padding: 7px 3px 15px; background: #f3f3f3; }
.scroll i { display: block; width: 1px; height: 100%; background: #888; }
.side { flex: 1; display: flex; flex-direction: column; gap: 4px; }
.inputs .side { gap: 5px; }
.push { height: 9px; background: #fefefe; border: 1px solid #ddd; border-radius: 2px; }
.main { border-color: #1679c8; }
.foot { display: flex; justify-content: flex-end; align-items: center; gap: 3px; height: 14px; padding: 0 3px; flex: none; }
.foot .push { width: 31px; }
.listbody { flex: 1; display: flex; gap: 4px; padding: 3px; }
.listbody .side { flex: none; width: 39px; }
.tree { flex: 1; display: flex; flex-direction: column; justify-content: space-between; align-items: flex-end; padding: 22px 1px 28px; background: #fafafa; border: 1px solid #aaa; }

.doctabs { display: flex; align-items: stretch; height: 11px; padding: 0 3px 1px 2px; color: #888; }
.doctabs button { padding: 1px 5px 0; }
.doctabs .on { color: #222; background: #fff; border: 1px solid #555; border-top: 0; }
.nudge { width: 8px; text-align: center; }
.status { display: flex; height: 9px; line-height: 8px; border-top: 1px solid #ddd; }
.help { flex: 502 0 0; }
.cell { flex: 29 0 0; border-left: 1px solid #ccc; }
.profile { flex: 48 0 0; padding-left: 2px; }
.profile + .cell { flex: 43 0 0; }
.net { flex: 58 0 0; display: flex; align-items: center; gap: 2px; padding-left: 2px; }
.net svg { width: 10px; height: 5px; }

.taskbar { display: grid; grid-template-columns: 1fr auto 1fr; height: 20px; background: #dbe4e8; font-family: "Open Sans", sans-serif; }
.weather { display: flex; align-items: center; gap: 8px; padding-left: 9px; }
.weather svg { width: 9px; height: 9px; }
.weather div, .time { display: flex; flex-direction: column; }
.soft { color: #777; }
.pinned { display: flex; align-items: center; gap: 3px; }
.pinned button { position: relative; width: 15px; height: 16px; border-radius: 2px; }
.pinned svg { width: 11px; height: 11px; }
.pinned .active { background: #edf4f5; }
.pinned .dot::after, .pinned .active::after { content: ""; position: absolute; bottom: 0; width: 2px; height: 1px; background: #777; }
.pinned .active::after { width: 6px; background: #169b8b; }
.tray { display: flex; align-items: center; justify-content: flex-end; gap: 4px; padding-right: 8px; }
.tray svg { width: 7px; height: 7px; stroke: #444; stroke-width: .8px; }
.time { align-items: flex-end; }
</style>
